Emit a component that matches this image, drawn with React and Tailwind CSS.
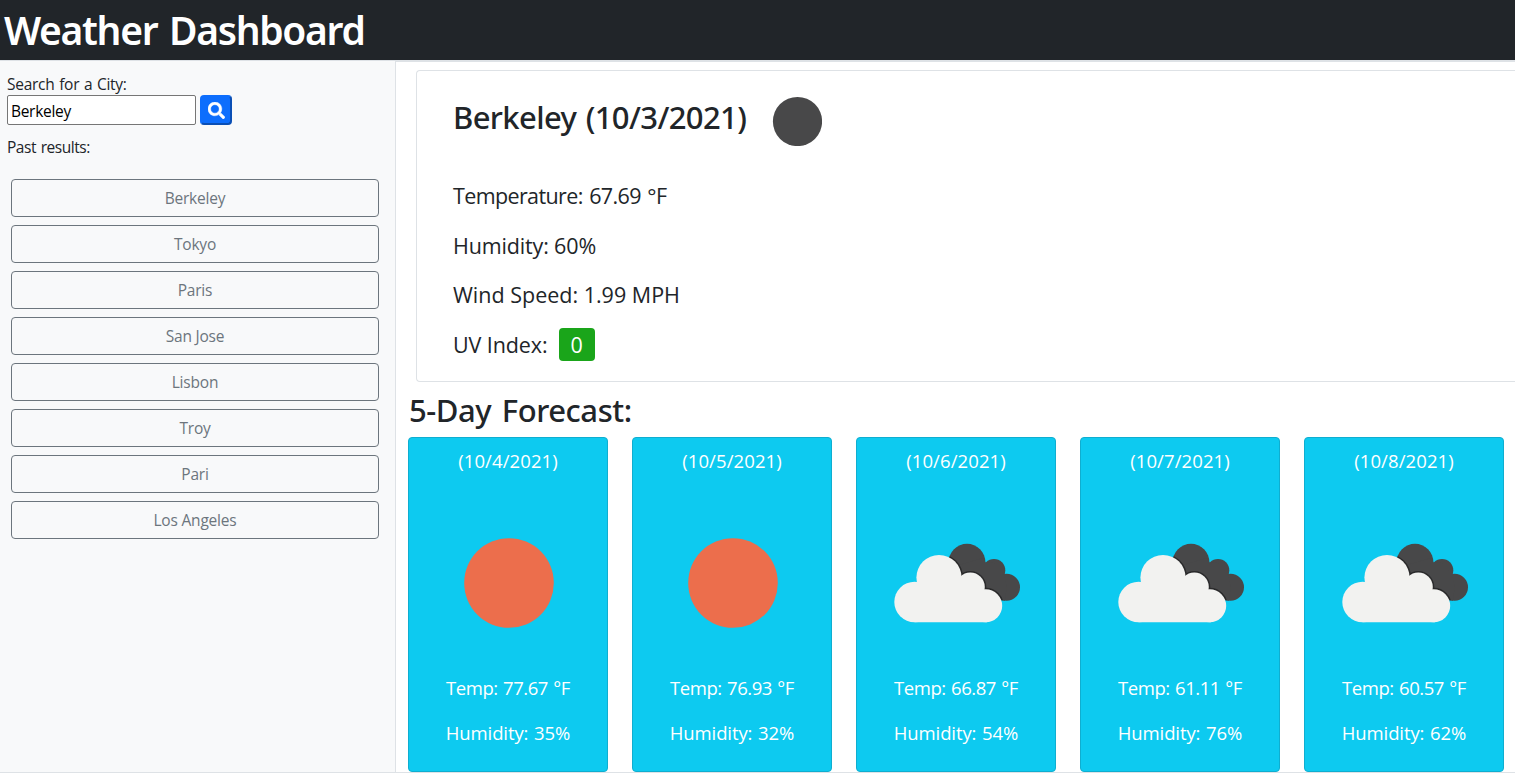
const cities = ["Berkeley", "Tokyo", "Paris", "San Jose", "Lisbon", "Troy", "Pari", "Los Angeles"];

const forecast = [
  { date: "(10/4/2021)", icon: "sun", temp: "77.67", humidity: 35 },
  { date: "(10/5/2021)", icon: "sun", temp: "76.93", humidity: 32 },
  { date: "(10/6/2021)", icon: "clouds", temp: "66.87", humidity: 54 },
  { date: "(10/7/2021)", icon: "clouds", temp: "61.11", humidity: 76 },
  { date: "(10/8/2021)", icon: "clouds", temp: "60.57", humidity: 62 },
];

function SearchIcon() {
  return (
    <svg viewBox="0 0 512 512" className="mt-px ml-px size-[17px] shrink-0" fill="currentColor" stroke="currentColor" strokeWidth="12" aria-hidden="true">
      <path d="M505 442.7L405.3 343c-4.500-4.500-10.600-7-17-7H372c27.600-35.300 44-79.700 44-128C416 93.100 322.900 0 208 0S0 93.100 0 208s93.100 208 208 208c48.300 0 92.700-16.400 128-44v16.300c0 6.400 2.500 12.500 7 17l99.700 99.700c9.400 9.400 24.600 9.400 33.900 0l28.300-28.300c9.400-9.400 9.400-24.600.1-34zM208 336c-70.700 0-128-57.200-128-128 0-70.700 57.200-128 128-128 70.700 0 128 57.200 128 128 0 70.700-57.200 128-128 128z" />
    </svg>
  );
}

function CloudShape() {
  return (
    <>
      <circle cx="21.600" cy="59" r="20.300" />
      <circle cx="46" cy="34.600" r="22.600" />
      <circle cx="77.300" cy="44" r="14.500" />
      <circle cx="92.700" cy="62.800" r="16.500" />
      <path d="M21.600 79.300V50L30 40H70L94 55V79.300Z" />
    </>
  );
}

function DarkCloudShape() {
  return (
    <>
      <circle cx="74" cy="19.200" r="18.400" />
      <circle cx="101" cy="27.300" r="11.300" />
      <circle cx="113.500" cy="44.300" r="13.500" />
      <path d="M66 22L90 15L92.500 19.500L101 20L111 31.500L113.700 44L112 57.700L100 56L75 38Z" />
    </>
  );
}

function WeatherIcon({ name }) {
  if (name === "sun") {
    return (
      <svg viewBox="0 0 200 200" className="size-[200px]" aria-label="Clear sky">
        <circle cx="101" cy="100" r="44.800" fill="#ec6e4c" />
      </svg>
    );
  }
  return (
    <svg viewBox="-37 -60 200 200" className="size-[200px]" aria-label="Broken clouds">
      <g fill="#484849">
        <DarkCloudShape />
      </g>
      <clipPath id="dark-cloud">
        <circle cx="74" cy="19.200" r="18.400" />
        <circle cx="101" cy="27.300" r="11.300" />
        <circle cx="113.500" cy="44.300" r="13.500" />
        <path d="M66 22L90 15L92.500 19.500L101 20L111 31.500L113.700 44L112 57.700L100 56L75 38Z" />
      </clipPath>
      <g clipPath="url(#dark-cloud)" fill="#2a2a2b" stroke="#2a2a2b" strokeWidth="3">
        <CloudShape />
      </g>
      <g fill="#f2f2f0">
        <CloudShape />
      </g>
    </svg>
  );
}

function ForecastCard({ day }) {
  return (
    <article className="flex h-[335px] w-[200px] shrink-0 flex-col items-center rounded border border-[#0faed0] bg-[#0dcaf0] text-[18.5px] leading-[27px] whitespace-nowrap text-white">
      <h3 className="mt-[9px] tracking-[0.1px]">{day.date}</h3>
      <div className="mt-[9px]">
        <WeatherIcon name={day.icon} />
      </div>
      <p className="mt-[-9px] tracking-[-0.45px] [word-spacing:1px]">Temp: {day.temp} °F</p>
      <p className="mt-[18px] tracking-[-0.1px] [word-spacing:1px]">Humidity: {day.humidity}%</p>
    </article>
  );
}

export default function App() {
  return (
    <div className="h-[781px] overflow-hidden bg-white font-['Open_Sans',sans-serif] text-[#212529]">
      <header className="flex h-[60px] items-center bg-[#212529] px-1">
        <h1 className="font-['Noto_Sans',sans-serif] text-[39px] leading-[48px] font-semibold tracking-[-1.32px] text-white [word-spacing:3px]">
          Weather Dashboard
        </h1>
      </header>
      <div className="flex h-[713px] border-y border-[#dee2e6]">
        <aside className="w-[396px] shrink-0 border-r border-[#dee2e6] bg-[#f8f9fa] text-[15.5px] leading-6 tracking-[-0.2px] [word-spacing:1px]">
          <div className="px-[7px] pt-[11px]">
            <label htmlFor="city" className="block tracking-[-0.28px]">Search for a City:</label>
            <div className="mt-[-1px] flex gap-1">
              <input
                id="city"
                defaultValue="Berkeley"
                className="h-[30px] w-[189px] rounded-[2px] border border-[#767676] bg-white px-[3px] pt-px tracking-[-0.3px] text-black"
              />
              <button
                aria-label="Search"
                className="flex h-[30px] w-8 items-center justify-center rounded border-2 border-t-[#0d6efd] border-r-[#0a4fb5] border-b-[#0a4fb5] border-l-[#0d6efd] bg-[#0d6efd] text-white"
              >
                <SearchIcon />
              </button>
            </div>
            <p className="mt-2.5 tracking-[-0.45px]">Past results:</p>
          </div>
          <ul className="mt-5 flex flex-col gap-2 pr-4 pl-[11px]">
            {cities.map((city) => (
              <li key={city}>
                <button className="block h-[38px] w-full rounded border border-[#6c757d] text-center text-[#6c757d]">{city}</button>
              </li>
            ))}
          </ul>
        </aside>
        <main className="min-w-0 flex-1 overflow-hidden border-t border-[#dee2e6]">
          <section className="mt-2 ml-5 h-[312px] rounded-l border border-r-0 border-[#dee2e6] pl-9">
            <div className="flex items-start">
              <h2 className="mt-[27px] w-[296px] font-['Noto_Sans',sans-serif] text-[31px] leading-[38px] font-medium tracking-[-0.62px] whitespace-nowrap [word-spacing:2px]">
                Berkeley (10/3/2021)
              </h2>
              <svg viewBox="0 0 50 50" className="mt-[25px] ml-[23px] size-[50px]" aria-label="Clear night">
                <circle cx="25.500" cy="25.500" r="24.600" fill="#484849" />
              </svg>
            </div>
            <div className="mt-[33px] flex flex-col gap-[16.5px] text-[21.5px] leading-[33px]">
              <p className="tracking-[-0.62px] [word-spacing:1.5px]">Temperature: 67.69 °F</p>
              <p className="tracking-[-0.15px]">Humidity: 60%</p>
              <p>Wind Speed: 1.99 MPH</p>
              <p className="flex tracking-[-0.1px]">
                UV Index:
                <span className="ml-[11px] flex h-[33px] w-9 items-center justify-center rounded bg-[#1aa51a] text-white">0</span>
              </p>
            </div>
          </section>
          <h2 className="mt-[9px] ml-[13px] font-['Noto_Sans',sans-serif] text-[31px] leading-[38px] font-medium tracking-[-0.45px] [word-spacing:3px]">5-Day Forecast:</h2>
          <div className="mt-2 ml-3 flex gap-6">
            {forecast.map((day) => (
              <ForecastCard key={day.date} day={day} />
            ))}
          </div>
        </main>
      </div>
    </div>
  );
}
